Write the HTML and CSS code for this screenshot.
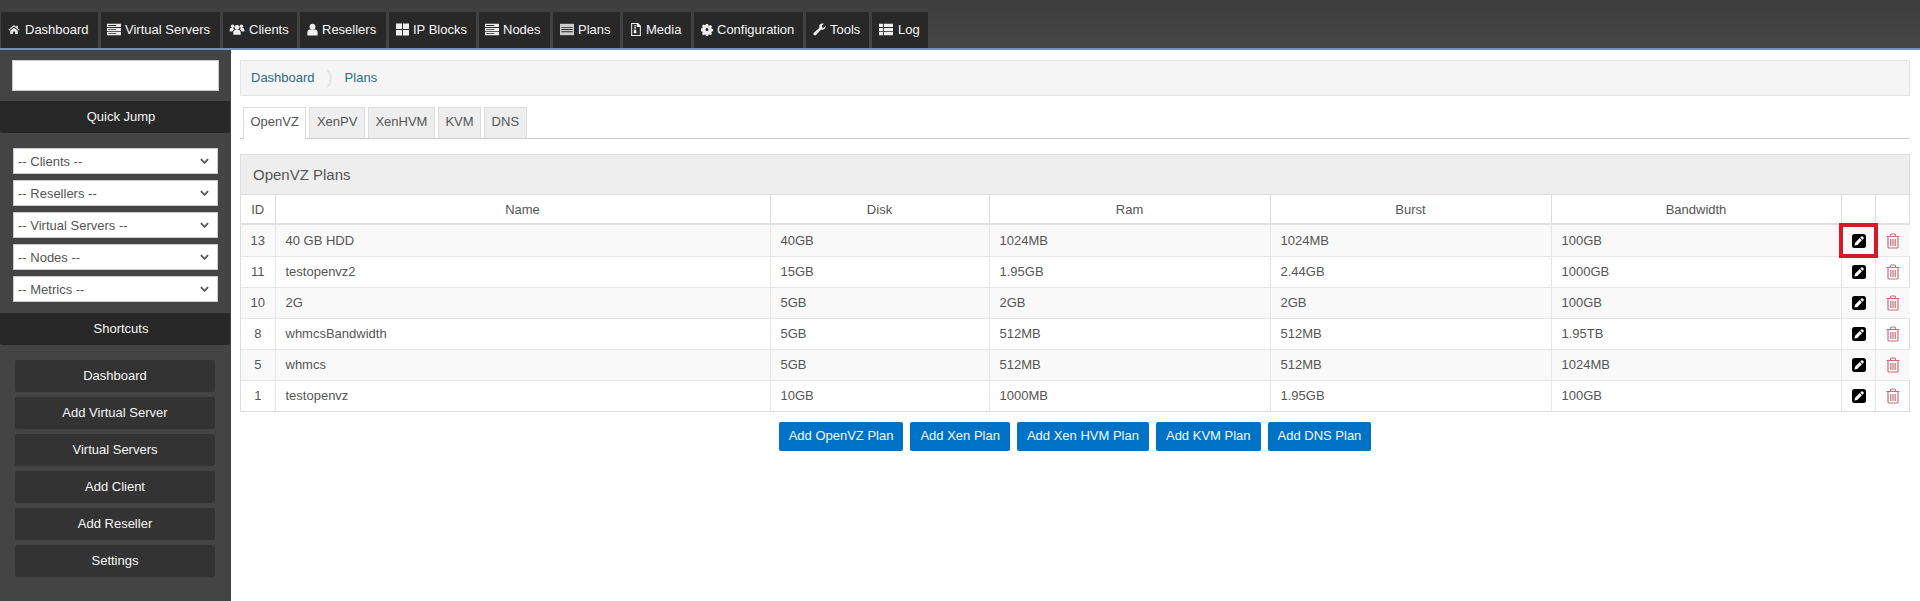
FILE: index.html
```html
<!DOCTYPE html>
<html lang="en">
<head>
    <meta charset="UTF-8">
    <meta name="viewport" content="width=device-width, initial-scale=1.0">
    <title>Plans</title>
    <link rel="stylesheet" href="styles.css">
</head>
<body>

<svg class="sprite" xmlns="http://www.w3.org/2000/svg">
    <symbol id="i-home" viewBox="0 0 16 16"><path d="M8 2 .6 8.200l.9 1.100L8 4l6.500 5.300.9-1.100L13 6.200V3h-2v1.500zM3 9.700V14h3.500v-3.200h3V14H13V9.700L8 5.500z"/></symbol>
    <symbol id="i-server" viewBox="0 0 16 14"><path d="M0 .5h16v3.700H0zM0 5.200h16v3.700H0zM0 9.800h16v3.700H0z"/><path class="cut" d="M1.500 1.900h9v1h-9zM1.500 6.600h9v1h-9zM1.500 11.200h9v1h-9z"/></symbol>
    <symbol id="i-users" viewBox="0 0 18 16"><circle cx="9" cy="5.500" r="3"/><circle cx="3.600" cy="4" r="2.200"/><circle cx="14.400" cy="4" r="2.200"/><path d="M4.500 14.500v-3c0-1.800 1.200-2.800 2.300-2.800h4.400c1.100 0 2.300 1 2.300 2.800v3zM0 10.500V8c0-1 .8-1.800 1.800-1.800h2.700c0 1 .4 1.700 1 2.100-1.300.4-2 1.200-2.100 2.200zM18 10.500V8c0-1-.8-1.800-1.800-1.800h-2.700c0 1-.4 1.700-1 2.100 1.300.4 2 1.200 2.100 2.200z"/></symbol>
    <symbol id="i-user" viewBox="0 0 14 16"><circle cx="7" cy="4.500" r="3.700"/><path d="M.5 15.500v-4C.5 9.500 2 8 3.500 8h7c1.500 0 3 1.500 3 3.500v4z"/></symbol>
    <symbol id="i-blocks" viewBox="0 0 14 14"><path d="M0 .5h6.500v6H0zM7.500 .5H14v6H7.500zM0 7.500h6.500v6H0zM7.500 7.500H14v6H7.500z"/></symbol>
    <symbol id="i-plans" viewBox="0 0 16 14"><path d="M0 .5h16v13H0z"/><path class="cut" d="M1.500 4h13v1h-13zM1.500 6.500h13v1h-13zM1.500 9h13v1h-13z"/></symbol>
    <symbol id="i-media" viewBox="0 0 14 16"><path fill-rule="evenodd" d="M1 0h8.500L13 3.500V16H1zM2.300 1.300v13.400h9.400V5H8V1.300z"/><path d="M5 2.500h1.700V4H5zM5 4.500h1.700V6H5zM5 6.500h1.700V8H5zM4.500 8.500h2.700l.5 4H4z"/></symbol>
    <symbol id="i-cog" viewBox="0 0 16 16"><path fill-rule="evenodd" d="M6.600 .5h2.800l.4 2 1.300.6 1.700-1.100 2 2-1.100 1.700.6 1.300 2 .4v2.800l-2 .4-.6 1.300 1.100 1.700-2 2-1.700-1.100-1.300.6-.4 2H6.600l-.4-2-1.300-.6-1.700 1.100-2-2 1.100-1.700-.6-1.300-2-.4V6.600l2-.4.6-1.300L1.200 3.200l2-2 1.700 1.100 1.300-.6zM8 6a2 2 0 1 0 0 4 2 2 0 0 0 0-4z"/></symbol>
    <symbol id="i-wrench" viewBox="0 0 16 16"><path d="M15.500 4.300c0 2.300-1.800 4.100-4.100 4.100-.5 0-1-.1-1.400-.3L3.800 14.700c-.8.800-2 .8-2.700 0-.8-.8-.8-1.900 0-2.700l6.800-6.100c-.2-.5-.3-1-.3-1.600C7.600 2.100 9.500.5 11.700.5c.6 0 1.200.1 1.700.4L10.800 3.400l.5 2 2 .5 2.200-2.500z"/></symbol>
    <symbol id="i-log" viewBox="0 0 16 14"><path d="M0 .5h4.500v3.700H0zM5.500 .5H16v3.700H5.500zM0 5.200h4.500v3.700H0zM5.500 5.200H16v3.700H5.500zM0 9.800h4.500v3.700H0zM5.500 9.800H16v3.700H5.500z"/></symbol>
    <symbol id="i-edit" viewBox="0 0 16 16"><rect x="1" y="1" width="14" height="14" rx="2.500" fill="#000"/><path fill="#fff" d="M10.300 3.500a1 1 0 0 1 1.400 0l.8.800a1 1 0 0 1 0 1.400l-1 1L9.300 4.500zM8.700 5.100l2.200 2.200-4.600 4.600-2.900.7.700-2.900z"/></symbol>
    <symbol id="i-trash" viewBox="0 0 14 16"><path fill="none" stroke="currentColor" stroke-width="1.200" d="M.5 3.500h13M4.500 3.500V2c0-.6.400-1 1-1h3c.6 0 1 .4 1 1v1.500M2 3.500v10.500c0 .6.400 1 1 1h8c.6 0 1-.4 1-1V3.500M4.800 6v7M7 6v7M9.200 6v7"/></symbol>
    <symbol id="i-chevron" viewBox="0 0 10 6"><path fill="none" stroke="currentColor" stroke-width="2" d="M1 1l4 4 4-4"/></symbol>
</svg>

<!-- Top navigation -->
<nav class="topnav">
    <a class="nav-tab tab-dashboard" href="#"><svg class="nav-icon icon-12 icon-gap"><use href="#i-home"/></svg>Dashboard</a>
    <a class="nav-tab tab-servers" href="#"><svg class="nav-icon icon-14"><use href="#i-server"/></svg>Virtual Servers</a>
    <a class="nav-tab tab-clients" href="#"><svg class="nav-icon icon-16"><use href="#i-users"/></svg>Clients</a>
    <a class="nav-tab tab-resellers" href="#"><svg class="nav-icon icon-11"><use href="#i-user"/></svg>Resellers</a>
    <a class="nav-tab tab-blocks" href="#"><svg class="nav-icon icon-13"><use href="#i-blocks"/></svg>IP Blocks</a>
    <a class="nav-tab tab-nodes" href="#"><svg class="nav-icon icon-14"><use href="#i-server"/></svg>Nodes</a>
    <a class="nav-tab tab-plans" href="#"><svg class="nav-icon icon-14 icon-dim"><use href="#i-plans"/></svg>Plans</a>
    <a class="nav-tab tab-media" href="#"><svg class="nav-icon icon-12"><use href="#i-media"/></svg>Media</a>
    <a class="nav-tab tab-config" href="#"><svg class="nav-icon icon-12"><use href="#i-cog"/></svg>Configuration</a>
    <a class="nav-tab tab-tools" href="#"><svg class="nav-icon icon-13"><use href="#i-wrench"/></svg>Tools</a>
    <a class="nav-tab tab-log" href="#"><svg class="nav-icon icon-14 icon-gap"><use href="#i-log"/></svg>Log</a>
</nav>

<div class="layout">
    <!-- Sidebar -->
    <aside class="sidebar">
        <input class="search" type="text">

        <div class="side-title">Quick Jump</div>
        <div class="jump-list">
            <div class="jump"><select><option>-- Clients --</option></select><svg class="chevron"><use href="#i-chevron"/></svg></div>
            <div class="jump"><select><option>-- Resellers --</option></select><svg class="chevron"><use href="#i-chevron"/></svg></div>
            <div class="jump"><select><option>-- Virtual Servers --</option></select><svg class="chevron"><use href="#i-chevron"/></svg></div>
            <div class="jump"><select><option>-- Nodes --</option></select><svg class="chevron"><use href="#i-chevron"/></svg></div>
            <div class="jump"><select><option>-- Metrics --</option></select><svg class="chevron"><use href="#i-chevron"/></svg></div>
        </div>

        <div class="side-title">Shortcuts</div>
        <div class="shortcuts">
            <a class="shortcut" href="#">Dashboard</a>
            <a class="shortcut" href="#">Add Virtual Server</a>
            <a class="shortcut" href="#">Virtual Servers</a>
            <a class="shortcut" href="#">Add Client</a>
            <a class="shortcut" href="#">Add Reseller</a>
            <a class="shortcut" href="#">Settings</a>
        </div>
    </aside>

    <!-- Main content -->
    <main class="content">
        <div class="breadcrumb">
            <a href="#">Dashboard</a>
            <span class="crumb-sep">)</span>
            <a href="#">Plans</a>
        </div>

        <div class="tabs">
            <a class="tab active" href="#">OpenVZ</a>
            <a class="tab" href="#">XenPV</a>
            <a class="tab" href="#">XenHVM</a>
            <a class="tab" href="#">KVM</a>
            <a class="tab" href="#">DNS</a>
        </div>

        <div class="panel">
            <div class="panel-title">OpenVZ Plans</div>
            <table class="plans">
                <colgroup>
                    <col class="col-id"><col class="col-name"><col class="col-disk"><col class="col-ram">
                    <col class="col-burst"><col class="col-band"><col class="col-edit"><col class="col-delete">
                </colgroup>
                <thead>
                    <tr><th>ID</th><th>Name</th><th>Disk</th><th>Ram</th><th>Burst</th><th>Bandwidth</th><th></th><th></th></tr>
                </thead>
                <tbody>
                    <tr>
                        <td class="cell-id">13</td><td>40 GB HDD</td><td>40GB</td><td>1024MB</td><td>1024MB</td><td>100GB</td>
                        <td class="cell-action cell-edit marked"><svg class="act-icon"><use href="#i-edit"/></svg><span class="highlight"></span></td>
                        <td class="cell-action"><svg class="act-icon trash"><use href="#i-trash"/></svg></td>
                    </tr>
                    <tr>
                        <td class="cell-id">11</td><td>testopenvz2</td><td>15GB</td><td>1.95GB</td><td>2.44GB</td><td>1000GB</td>
                        <td class="cell-action cell-edit"><svg class="act-icon"><use href="#i-edit"/></svg></td>
                        <td class="cell-action"><svg class="act-icon trash"><use href="#i-trash"/></svg></td>
                    </tr>
                    <tr>
                        <td class="cell-id">10</td><td>2G</td><td>5GB</td><td>2GB</td><td>2GB</td><td>100GB</td>
                        <td class="cell-action cell-edit"><svg class="act-icon"><use href="#i-edit"/></svg></td>
                        <td class="cell-action"><svg class="act-icon trash"><use href="#i-trash"/></svg></td>
                    </tr>
                    <tr>
                        <td class="cell-id">8</td><td>whmcsBandwidth</td><td>5GB</td><td>512MB</td><td>512MB</td><td>1.95TB</td>
                        <td class="cell-action cell-edit"><svg class="act-icon"><use href="#i-edit"/></svg></td>
                        <td class="cell-action"><svg class="act-icon trash"><use href="#i-trash"/></svg></td>
                    </tr>
                    <tr>
                        <td class="cell-id">5</td><td>whmcs</td><td>5GB</td><td>512MB</td><td>512MB</td><td>1024MB</td>
                        <td class="cell-action cell-edit"><svg class="act-icon"><use href="#i-edit"/></svg></td>
                        <td class="cell-action"><svg class="act-icon trash"><use href="#i-trash"/></svg></td>
                    </tr>
                    <tr>
                        <td class="cell-id">1</td><td>testopenvz</td><td>10GB</td><td>1000MB</td><td>1.95GB</td><td>100GB</td>
                        <td class="cell-action cell-edit"><svg class="act-icon"><use href="#i-edit"/></svg></td>
                        <td class="cell-action"><svg class="act-icon trash"><use href="#i-trash"/></svg></td>
                    </tr>
                </tbody>
            </table>
        </div>

        <div class="actions">
            <a class="btn" href="#">Add OpenVZ Plan</a>
            <a class="btn" href="#">Add Xen Plan</a>
            <a class="btn" href="#">Add Xen HVM Plan</a>
            <a class="btn" href="#">Add KVM Plan</a>
            <a class="btn" href="#">Add DNS Plan</a>
        </div>
    </main>
</div>

</body>
</html>
```

FILE: styles.css
```css
* {
    box-sizing: border-box;
}
html, body {
    height: 100%;
}
body {
    font-family: 'Liberation Sans', Arial, sans-serif;
    font-size: 13px;
    background: #fff;
    color: #555;
    margin: 0;
    padding: 0;
    display: flex;
    flex-direction: column;
    overflow: hidden;
}
a {
    text-decoration: none;
}
.sprite {
    display: none;
}

/* top navigation */
.topnav {
    display: flex;
    gap: 3px;
    height: 50px;
    padding: 12px 0 0 1px;
    background: linear-gradient(#3d3d3d, #464646);
    border-bottom: 2px solid #7192b5;
    flex-shrink: 0;
}
.nav-tab {
    display: flex;
    align-items: center;
    height: 36px;
    padding: 0 0 1px 7px;
    background: #282828;
    color: #f6f6f6;
    white-space: nowrap;
}
.nav-icon {
    height: 13px;
    margin-right: 4px;
    fill: #eee;
    color: #282828;
}
.cut {
    fill: #282828;
}
.icon-11 { width: 11px; }
.icon-12 { width: 12px; }
.icon-13 { width: 13px; }
.icon-14 { width: 14px; }
.icon-16 { width: 16px; }
.icon-gap { margin-right: 5px; }
.icon-dim { fill: #ccc; }
.tab-dashboard { width: 97px; }
.tab-servers { width: 119px; padding-left: 6px; }
.tab-clients { width: 74px; padding-left: 6px; }
.tab-resellers { width: 86px; }
.tab-blocks { width: 87px; }
.tab-nodes { width: 71px; padding-left: 6px; }
.tab-plans { width: 67px; }
.tab-media { width: 68px; }
.tab-config { width: 109px; }
.tab-tools { width: 63px; }
.tab-log { width: 56px; }

.layout {
    display: flex;
    flex: 1;
    min-height: 0;
}

/* sidebar */
.sidebar {
    width: 231px;
    flex-shrink: 0;
    background: #444;
    padding-top: 10px;
}
.search {
    display: block;
    width: 207px;
    height: 31px;
    margin: 0 0 10px 12px;
    border: 1px solid #ccc;
    background: #fff;
}
.side-title {
    height: 32px;
    width: 230px;
    line-height: 31px;
    padding-left: 12px;
    background: #282828;
    color: #f6f6f6;
    text-align: center;
    border-radius: 0 0 2px 2px;
}
.jump-list {
    display: flex;
    flex-direction: column;
    gap: 6px;
    padding: 15px 0 11px 13px;
}
.jump {
    position: relative;
    width: 205px;
    height: 26px;
}
.jump select {
    display: block;
    width: 100%;
    height: 100%;
    appearance: none;
    border: 1px solid #ccc;
    border-radius: 0;
    background: #fff;
    color: #555;
    font-family: inherit;
    font-size: 13px;
    padding: 0 4px;
}
.chevron {
    position: absolute;
    right: 9px;
    top: 10px;
    width: 9px;
    height: 6px;
    color: #555;
    pointer-events: none;
}
.shortcuts {
    display: flex;
    flex-direction: column;
    gap: 5px;
    padding: 15px 0 0 15px;
}
.shortcut {
    display: block;
    width: 200px;
    height: 32px;
    line-height: 31px;
    background: #333;
    color: #f6f6f6;
    text-align: center;
    border-radius: 2px;
}

/* main content */
.content {
    flex: 1;
    min-width: 0;
    padding: 10px 10px 0 9px;
}
.breadcrumb {
    display: flex;
    align-items: center;
    height: 36px;
    padding: 0 0 1px 10px;
    background: #f5f5f5;
    border: 1px solid #e3e3e3;
}
.breadcrumb a {
    color: #2f6a87;
}
.crumb-sep {
    margin: 0 12px;
    color: #e2e2e2;
    font-size: 18px;
}
.tabs {
    display: flex;
    gap: 3px;
    height: 32px;
    margin-top: 11px;
    padding-left: 3px;
    border-bottom: 1px solid #ccc;
}
.tab {
    height: 31px;
    line-height: 27px;
    padding: 0 6.5px;
    background: #eee;
    border: 1px solid #ddd;
    border-bottom: none;
    color: #555;
}
.tab.active {
    height: 32px;
    background: #fff;
    border-color: #ddd;
}
.panel {
    margin-top: 15px;
    border: 1px solid #ddd;
}
.panel-title {
    height: 40px;
    line-height: 39px;
    padding-left: 12px;
    background: #eee;
    border-bottom: 1px solid #ddd;
    font-size: 15px;
    color: #555;
}
.plans {
    width: 100%;
    table-layout: fixed;
    border-collapse: collapse;
}
.col-id { width: 34px; }
.col-name { width: 495px; }
.col-disk { width: 219px; }
.col-ram { width: 281px; }
.col-burst { width: 281px; }
.col-band { width: 290px; }
.col-edit { width: 34px; }
.col-delete { width: 35px; }
.plans th {
    height: 29px;
    font-weight: normal;
    border-left: 1px solid #ddd;
    border-bottom: 2px solid #e0e0e0;
    text-align: center;
}
.plans td {
    height: 31px;
    padding: 0 10px;
    border-left: 1px solid #e6e6e6;
    border-top: 1px solid #e6e6e6;
}
.plans tbody tr:first-child td {
    height: 32px;
}
.plans th:first-child,
.plans td:first-child {
    border-left: none;
}
.plans tbody tr:nth-child(odd) {
    background: #f9f9f9;
}
.plans td.cell-id {
    text-align: center;
    padding: 0;
}
.plans td.cell-action {
    text-align: center;
    padding: 0;
}
.plans td.cell-edit {
    padding-left: 1px;
}
.marked {
    position: relative;
}
/* red marker drawn over the first edit button */
.highlight {
    position: absolute;
    left: -3px;
    top: -2px;
    width: 39px;
    height: 35px;
    border: 4px solid #d41a26;
}
.act-icon {
    display: block;
    width: 16px;
    height: 16px;
    margin: 1px auto 0;
}
.trash {
    color: #c96f7a;
}
.actions {
    display: flex;
    justify-content: center;
    gap: 7px;
    margin-top: 10px;
}
.btn {
    display: block;
    height: 29px;
    line-height: 27px;
    padding: 0 10px;
    background: #0072c6;
    color: #f4f8fb;
    border-radius: 2px;
}
```
